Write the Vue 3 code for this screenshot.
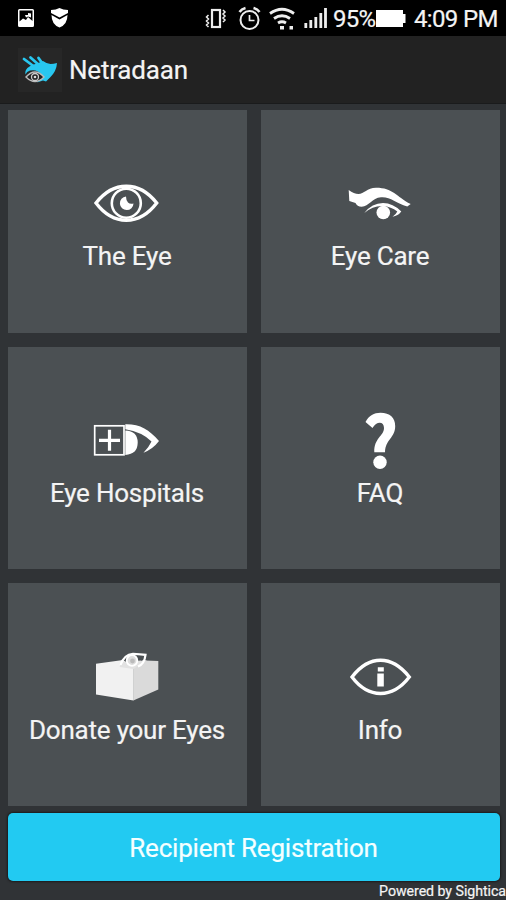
<script setup>
    import { reactive } from 'vue'

    const state = reactive({
        battery: 95,
        time: '4:09 PM',
        tiles: [
            { id: 'eye', title: 'The Eye' },
            { id: 'care', title: 'Eye Care' },
            { id: 'hospital', title: 'Eye Hospitals' },
            { id: 'faq', title: 'FAQ' },
            { id: 'donate', title: 'Donate your Eyes' },
            { id: 'info', title: 'Info' }
        ]
    })
</script>

<template>
    <div class="screen">
        <div class="statusBar">
            <svg class="notice" width="60" height="36" viewBox="0 0 60 36">
                <path fill="#fff" fill-rule="evenodd" d="M1.500 9h13q1.500 0 1.500 1.500v15q0 1.500-1.500 1.500h-13Q0 27 0 25.500v-15Q0 9 1.500 9z M1.500 10.500v11l3.500-3 3 1.500 2-3 4.500 4v-10.500z" />
                <path fill="#fff" d="M10 13l3 .5v4l-3-1-2 1-1-2.500h3z" />
                <path fill="#fff" d="M33 10q5 0 8.500-2 3.500 2 8.500 2v3l-8.500 4.500L33 13z M33.500 15l8 4.500 8-4.500q0 9.500-8 12.500-8-3-8-12.500z" />
            </svg>
            <div class="statusRight">
                <svg width="122" height="36" viewBox="206 0 122 36" fill="none" stroke="#eee">
                    <rect x="213" y="10" width="8" height="17" stroke-width="2.200" />
                    <path stroke-width="1.500" d="M209.500 15l-2 2 2 2-2 2 2 2-2 2 2 2M224 10l2 2-2 2 2 2-2 2 2 2-2 2" />
                    <circle cx="250.500" cy="20" r="9" stroke-width="2" />
                    <path stroke-width="1.700" d="M250.500 15v5.500h5" />
                    <path stroke-width="2.500" d="M240.500 12q2-3 6-4M254.500 8q4 1 6 4" />
                    <path stroke-width="2.800" d="M271 13.500q12-8.500 24 0M275 18.500q8-5.500 16 0M279 23q4-2.500 8 0" />
                    <path fill="#eee" stroke="none" d="M281 26h4v3.500h-4zM290.500 26h3.500v3.500h-3.500z" />
                    <path stroke-width="2.800" d="M306.800 28v-5M311.800 28v-8M316.800 28v-11M321.800 28v-15M326.500 28V8" />
                </svg>
                <span class="percent">{{ state.battery }}%</span>
                <svg class="battery" width="30" height="36" viewBox="0 0 30 36">
                    <path fill="#fff" d="M0 10h27v4h2.500v9H27v4H0z" />
                </svg>
                <span class="time">{{ state.time }}</span>
            </div>
        </div>

        <div class="titleBar">
            <svg class="logo" width="44" height="44" viewBox="0 0 44 44">
                <rect width="44" height="44" fill="#272727" />
                <path fill="none" stroke="#28c7f0" stroke-width="2.800" stroke-linecap="round" d="M6 11l12 9M12.500 9.500l9 8M20.500 10l5 7" />
                <path fill="#28c7f0" d="M13 17.500l8.500-3 3.500-1.500q4 3 7.500 3 3 0 6.500-1-.5 8-6.500 14l-4.500 4.500-3-1-6 2q7-4 4-8.500-4-5-11-3.500-3.500 1-4.500 4-1.500-5 5.500-9z" />
                <path fill="#222" stroke="#bbb" stroke-width="1.400" d="M8 29q9-10 18 0-9 9-18 0z" />
                <circle cx="17" cy="29" r="3.500" fill="none" stroke="#ccc" stroke-width="1.300" />
                <circle cx="17" cy="29" r="1.300" fill="#ddd" />
            </svg>
            <span class="appName">Netradaan</span>
        </div>

        <div class="grid">
            <div class="tile" v-for="item in state.tiles" :key="item.id">
                <svg class="icon" width="80" height="64" viewBox="0 0 80 64" fill="none" stroke="#fff">
                    <g v-if="item.id == 'eye'">
                        <path stroke-width="3.400" d="M9 31Q22 14.200 39.300 14.200T69.700 31Q56.500 48.300 39.300 48.300T9 31z" />
                        <circle cx="39.300" cy="31.200" r="14.500" stroke-width="2.600" />
                        <path fill="#fff" stroke="none" d="M39 24.500A6.800 6.800 0 1 0 46.500 31.500Q43 32.500 41 30.500T39 24.500z" />
                    </g>
                    <g v-else-if="item.id == 'care'" fill="#fff" stroke="none">
                        <path d="M8.700 18Q14 22 18.500 22C24 22 27 15.700 36 15.700 53 15.700 56 24.500 70.700 32L67.300 34.500C56 31 50 24.500 41 25.300 32 26 29 34.700 21.700 34.700Q17 34.700 15.500 31L9.300 29z" />
                        <path d="M24.300 41Q32 31 43 31 53 31 61.300 39.500 58 44 52.500 44.700 56 42.500 57.300 39.500 51 34.500 43 34 33 33.500 24.300 41z" />
                        <circle cx="43.300" cy="40.500" r="6.800" />
                    </g>
                    <g v-else-if="item.id == 'hospital'">
                        <rect x="7.700" y="16.800" width="29.300" height="29" stroke-width="1.700" />
                        <path stroke-width="3.200" d="M12 31.300h21M22.500 20.800v21" />
                        <path fill="#fff" stroke="none" d="M38.300 21.500Q50.700 22 50.700 33.500T38.300 46z" />
                        <path fill="#fff" stroke="none" d="M38.300 15.300C53 15 62 20.500 72 32Q66 40 56.500 43.700 62 38 64.500 32.500 55 23 38.300 20.300z" />
                    </g>
                    <g v-else-if="item.id == 'faq'" fill="#fff" stroke="none">
                        <path d="M25.500 13C29 6.500 34 3.700 40.500 3.700 50 3.700 55.200 8.700 55.200 17 55.200 29 45.500 30 45 43.300H34.300C33.800 29 44 27 44 19 44 12 36.500 12 32.500 19z" />
                        <circle cx="40" cy="53.300" r="6.700" />
                    </g>
                    <g v-else-if="item.id == 'donate'" stroke="none">
                        <path fill="#dadada" d="M46.300 22L58 14.500l13.300.5v28.500l-25 11z" />
                        <path fill="#f1f1f1" d="M9 17.700L36 14l10.500 7v33.500L9 48.500z" />
                        <path fill="#e2e2e2" d="M35 16l25-2-13.500 9-14-2z" />
                        <path stroke="#fff" stroke-width="2.200" fill="none" d="M33.500 19Q37 8.500 46 7.800L58.500 8.800Q57.500 18 51 20.500" />
                        <path fill="#4b5053" d="M49.500 9.500l7 .5-2 5z" />
                        <circle cx="45" cy="14.500" r="5.300" fill="#ddd" stroke="#fff" stroke-width="1.800" />
                        <circle cx="45.500" cy="15" r="2.400" fill="#bbb" />
                    </g>
                    <g v-else>
                        <path stroke-width="3.400" d="M12 31Q25 14.300 40.500 14.300T69.300 31Q56.500 47.500 40.500 47.500T12 31z" />
                        <path fill="#fff" stroke="none" d="M37.800 21.300h6v4.300h-6zM37.300 27.500h6.500v13h-6.500z" />
                    </g>
                </svg>
                <span class="tileTitle">{{ item.title }}</span>
            </div>
        </div>

        <button class="register">Recipient Registration</button>
        <div class="powered">Powered by Sightica</div>
    </div>
</template>

<style>
body{
    margin: 0;
    background: #303336;
}
</style>

<style scoped>
.screen{
    width: 506px;
    height: 900px;
    display: flex;
    flex-direction: column;
    overflow: hidden;
    background: #303336;
    font-family: Roboto, "Liberation Sans", sans-serif;
    color: #f4f4f4;
    -webkit-text-stroke: 0.2px;
}

.statusBar{
    height: 36px;
    flex: none;
    display: flex;
    justify-content: space-between;
    padding: 0 9px 0 18px;
    background: #000;
    line-height: 38px;
    font-size: 24px;
}
.statusRight{
    display: flex;
    white-space: nowrap;
}
.percent{
    width: 43px;
    margin-left: 6px;
    letter-spacing: -0.8px;
}
.time{
    width: 83px;
    margin-left: 8px;
    letter-spacing: -0.65px;
}

.titleBar{
    height: 68px;
    flex: none;
    display: flex;
    align-items: center;
    padding-left: 18px;
    box-sizing: border-box;
    background: #222;
    border-bottom: 1px solid #1a1b1c;
}
.appName{
    margin-left: 7px;
    font-size: 26px;
    letter-spacing: -0.2px;
}

.grid{
    display: grid;
    grid-template-columns: 1fr 1fr;
    grid-auto-rows: 222.5px;
    gap: 14.2px 14px;
    padding: 6px 6.5px 0 7.5px;
}
.tile{
    display: flex;
    flex-direction: column;
    align-items: center;
    background: #4b5053;
    box-sizing: border-box;
    padding-top: 62.2px;
}
.icon{
    flex: none;
}
.tileTitle{
    margin-top: 5px;
    line-height: 30px;
    font-size: 26px;
    letter-spacing: -0.22px;
    white-space: nowrap;
}

.register{
    height: 68px;
    flex: none;
    margin: 7px 6.5px 0 7.5px;
    padding: 2px 0 0;
    border: 0;
    border-radius: 5px;
    background: #22caf2;
    box-shadow: 0 0 2px 1px #1b1c1d;
    color: #f4ffff;
    font-family: inherit;
    font-size: 26px;
    letter-spacing: -0.2px;
}
.powered{
    align-self: flex-end;
    margin-top: 2px;
    font-size: 14.2px;
    line-height: 17px;
    letter-spacing: -0.05px;
    white-space: nowrap;
}
</style>
